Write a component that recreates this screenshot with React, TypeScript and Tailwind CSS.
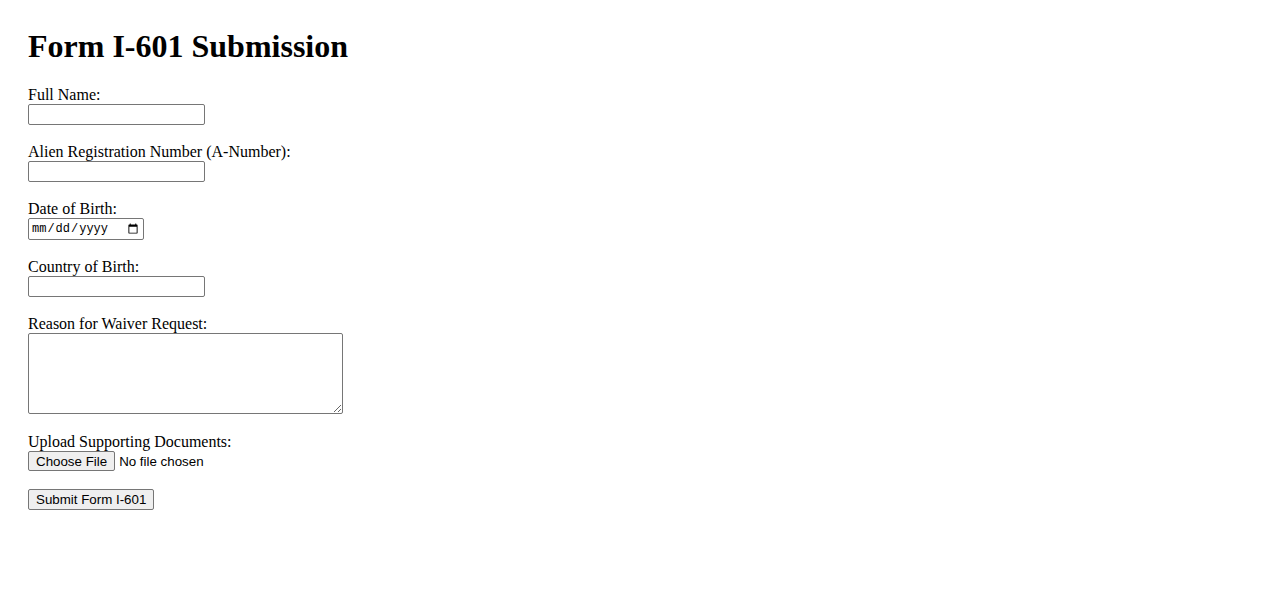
export default function App() {
  const field =
    "block h-[21px] w-[177px] border border-[#767676] rounded-[2px] bg-white px-[2px] py-[1px] text-[13.333px] font-['Liberation_Sans',Arial,sans-serif] text-black outline-none";

  return (
    <div className="min-h-[601px] bg-white pl-[28px] pt-[28px] font-['Liberation_Serif','Times_New_Roman',serif] text-[16px] text-black">
      <h1 className="mb-[21px] text-[32px] font-bold leading-[37px]">Form I-601 Submission</h1>

      <form onSubmit={(e) => e.preventDefault()}>
        <label className="block leading-[18px]" htmlFor="fullName">
          Full Name:
        </label>
        <input id="fullName" type="text" className={`${field} mb-[18px]`} />

        <label className="block leading-[18px]" htmlFor="aNumber">
          Alien Registration Number (A-Number):
        </label>
        <input id="aNumber" type="text" className={`${field} mb-[18px]`} />

        <label className="block leading-[18px]" htmlFor="dob">
          Date of Birth:
        </label>
        <input
          id="dob"
          type="date"
          className="mb-[18px] block h-[22px] w-[116px] rounded-[2px] border border-[#767676] bg-white px-[2px] py-[1px] font-['Liberation_Mono',monospace] text-[12px] text-black outline-none"
        />

        <label className="block leading-[18px]" htmlFor="country">
          Country of Birth:
        </label>
        <input id="country" type="text" className={`${field} mb-[18px]`} />

        <label className="block leading-[18px]" htmlFor="reason">
          Reason for Waiver Request:
        </label>
        <textarea
          id="reason"
          className="mb-[19px] block h-[81px] w-[315px] resize rounded-[2px] border border-[#767676] bg-white px-[2px] py-[1px] font-['Liberation_Mono',monospace] text-[13.333px] outline-none"
        />

        <label className="block leading-[18px]" htmlFor="docs">
          Upload Supporting Documents:
        </label>
        <input
          id="docs"
          type="file"
          className="mb-[18px] block h-[20px] w-[253px] font-['Liberation_Sans',Arial,sans-serif] text-[13.333px] leading-[20px] text-black file:mr-[4px] file:h-[20px] file:rounded-[2px] file:border file:border-[#767676] file:bg-[#efefef] file:px-[7px] file:text-[13.333px] file:text-black"
        />

        <button
          type="submit"
          className="block h-[21px] rounded-[2px] border border-[#767676] bg-[#efefef] px-[7px] font-['Liberation_Sans',Arial,sans-serif] text-[13.333px] leading-[17px] text-black"
        >
          Submit Form I-601
        </button>
      </form>
    </div>
  );
}
